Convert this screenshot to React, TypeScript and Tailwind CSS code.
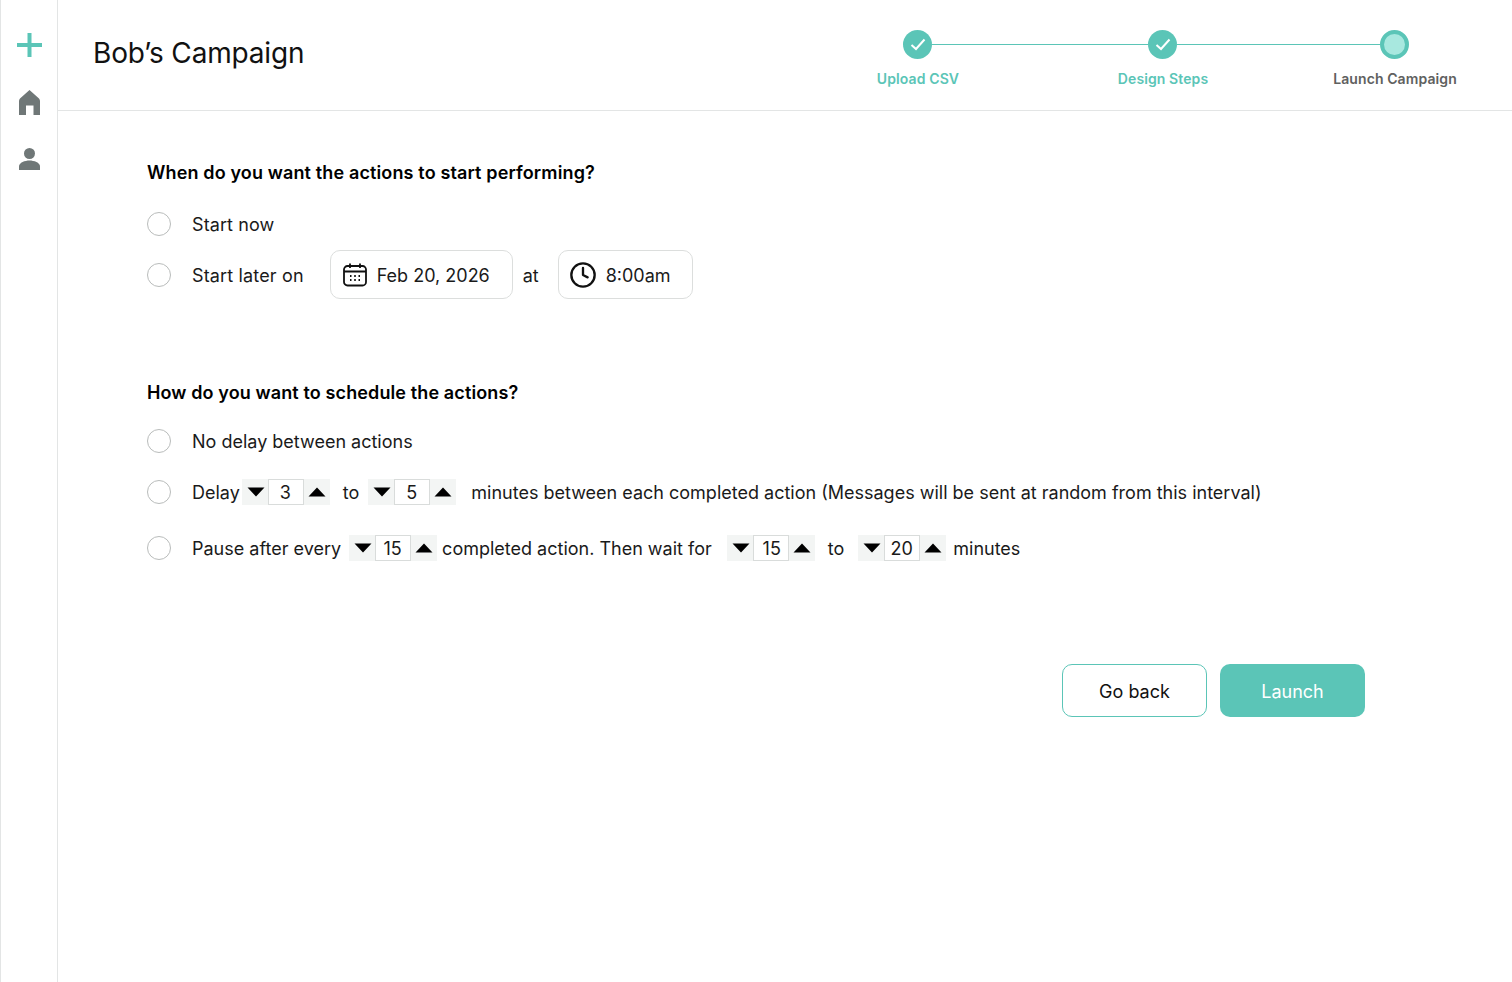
import { Clock } from 'lucide-react';

function Radio() {
  return <span className="block w-6 h-6 shrink-0 rounded-full border border-[#b9bcbb] bg-white" />;
}

function Arrow({ up }: { up?: boolean }) {
  return (
    <svg width="18" height="10" viewBox="0 0 18 10" className="shrink-0">
      <path d={up ? 'M9 0.5 L17.5 9.5 H0.5 Z' : 'M0.5 0.5 H17.5 L9 9.5 Z'} fill="#000" />
    </svg>
  );
}

function Stepper({ value, className, flush }: { value: number; className?: string; flush?: boolean }) {
  return (
    <div className={`flex items-stretch w-[88px] h-[26px] shrink-0 bg-[#f3f5f4] ${className ?? ''}`}>
      <div className="w-[26px] flex items-center justify-center pl-[2px]">
        <Arrow />
      </div>
      <div className={`w-[36px] bg-white border border-[#d9dcdb] flex items-center justify-center text-[18px] text-[#1a1a1a] ${flush ? 'pl-[2px]' : 'pr-[1px]'}`}>
        {value}
      </div>
      <div className="w-[26px] flex items-center justify-center">
        <Arrow up />
      </div>
    </div>
  );
}

function Step({ label, done, current }: { label: string; done?: boolean; current?: boolean }) {
  return (
    <div className="w-[29px] flex flex-col items-center shrink-0">
      {done ? (
        <div className="w-[29px] h-[29px] rounded-full bg-[#5bc5b7] flex items-center justify-center">
          <svg width="16" height="13" viewBox="0 0 16 13" fill="none">
            <path d="M1.5 7 L6 11 L14.5 1.5" stroke="#fff" strokeWidth="2" />
          </svg>
        </div>
      ) : (
        <div className="w-[29px] h-[29px] rounded-full bg-[#a8e8df] border-[4px] border-[#5bc5b7]" />
      )}
      <div className={`mt-[9px] pl-[1px] text-[14px] font-semibold tracking-[0.1px] whitespace-nowrap ${current ? 'text-[#5f6160]' : 'text-[#5bc5b7]'}`}>
        {label}
      </div>
    </div>
  );
}

export default function App() {
  return (
    <div className="flex h-[982px] bg-white text-[18px] text-[#1a1a1a] overflow-hidden font-['Inter',sans-serif]">
      <aside className="w-[58px] shrink-0 border-l border-r border-[#e3e5e5] flex flex-col items-center pt-[33px]">
        <svg width="25" height="24" viewBox="0 0 25 24">
          <path d="M0 12 H25 M12.5 0 V24" stroke="#5bc5b7" strokeWidth="4" />
        </svg>
        <svg width="21" height="25" viewBox="0 0 21 25" className="mt-[33px]">
          <path d="M10.5 0 L20 8.5 Q21 9.5 21 11 V25 H14.5 V15.5 H7 V25 H0 V11 Q0 9.5 1 8.5 Z" fill="#6f7777" />
        </svg>
        <svg width="21" height="22" viewBox="0 0 21 22" className="mt-[33px]">
          <circle cx="10.5" cy="5.5" r="5.5" fill="#6f7777" />
          <path d="M0 22 V18.5 C0 14.5 6 12.5 10.5 12.5 S21 14.5 21 18.5 V22 Z" fill="#6f7777" />
        </svg>
      </aside>
      <main className="flex-1 min-w-0">
        <header className="h-[111px] border-b border-[#e3e5e5] flex items-start">
          <h1 className="ml-[35px] mt-[35px] text-[28px] leading-[36px] font-normal tracking-[-0.17px] text-[#111]">Bob’s Campaign</h1>
          <div className="absolute left-[903px] top-[30px] flex items-start">
            <Step label="Upload CSV" done />
            <div className="w-[216px] h-px bg-[#5bc5b7] mt-[14px]" />
            <Step label="Design Steps" done />
            <div className="w-[203px] h-px bg-[#5bc5b7] mt-[14px]" />
            <Step label="Launch Campaign" current />
          </div>
        </header>

        <section className="pl-[89px] pt-[50px]">
          <h2 className="text-[18px] leading-[24px] font-semibold tracking-[0.14px] text-black">When do you want the actions to start performing?</h2>
          <div className="mt-[26px] flex items-center gap-[21px] h-[26px]">
            <Radio />
            <span className="pt-[1px] tracking-[0.1px]">Start now</span>
          </div>
          <div className="mt-[13px] flex items-center h-[49px]">
            <Radio />
            <span className="ml-[21px] pt-[2px] tracking-[0.15px]">Start later on</span>
            <div className="ml-[26px] w-[183px] h-[49px] rounded-[10px] border border-[#dcdedd] flex items-center pl-[12px]">
              <svg width="24" height="24" viewBox="0 0 24 24" fill="none" stroke="#111" strokeWidth="1.8">
                <rect x="1" y="3" width="22" height="19.5" rx="3.5" />
                <path d="M1 8.5 H23 M7 0.5 V5 M17 0.5 V5" />
                <path d="M7 13 H8.5 M11.2 13 H12.8 M15.5 13 H17 M7 17 H8.5 M11.2 17 H12.8 M15.5 17 H17" />
              </svg>
              <span className="ml-[10px] pt-[2px]">Feb 20, 2026</span>
            </div>
            <span className="ml-[10px] pt-[2px]">at</span>
            <div className="ml-[19px] w-[135px] h-[49px] rounded-[10px] border border-[#dcdedd] flex items-center pl-[10px]">
              <Clock size={28} strokeWidth={2} color="#111" />
              <span className="ml-[9px] pt-[2px]">8:00am</span>
            </div>
          </div>
        </section>

        <section className="pl-[89px] pt-[82px]">
          <h2 className="text-[18px] leading-[24px] font-semibold tracking-[0.12px] text-black">How do you want to schedule the actions?</h2>
          <div className="mt-[23px] flex items-center gap-[21px] h-[26px]">
            <Radio />
            <span>No delay between actions</span>
          </div>
          <div className="mt-[25px] flex items-center h-[26px] whitespace-nowrap">
            <Radio />
            <span className="ml-[21px]">Delay</span>
            <Stepper value={3} className="ml-[2px]" />
            <span className="ml-[13px]">to</span>
            <Stepper value={5} className="ml-[9px]" />
            <span className="ml-[15px]">minutes between each completed action (Messages will be sent at random from this interval)</span>
          </div>
          <div className="mt-[30px] flex items-center h-[26px] whitespace-nowrap">
            <Radio />
            <span className="ml-[21px]">Pause after every</span>
            <Stepper value={15} className="ml-[8px]" />
            <span className="ml-[5px]">completed action. Then wait for</span>
            <Stepper value={15} flush className="ml-[15px]" />
            <span className="ml-[13px]">to</span>
            <Stepper value={20} className="ml-[14px]" />
            <span className="ml-[7px]">minutes</span>
          </div>
        </section>

        <div className="mt-[103px] ml-[1004px] flex gap-[13px]">
          <button className="w-[145px] h-[53px] pt-[2px] rounded-[10px] border border-[#5bc5b7] bg-white text-[#111]">Go back</button>
          <button className="w-[145px] h-[53px] pt-[2px] rounded-[10px] bg-[#5bc5b7] text-white">Launch</button>
        </div>
      </main>
    </div>
  );
}
